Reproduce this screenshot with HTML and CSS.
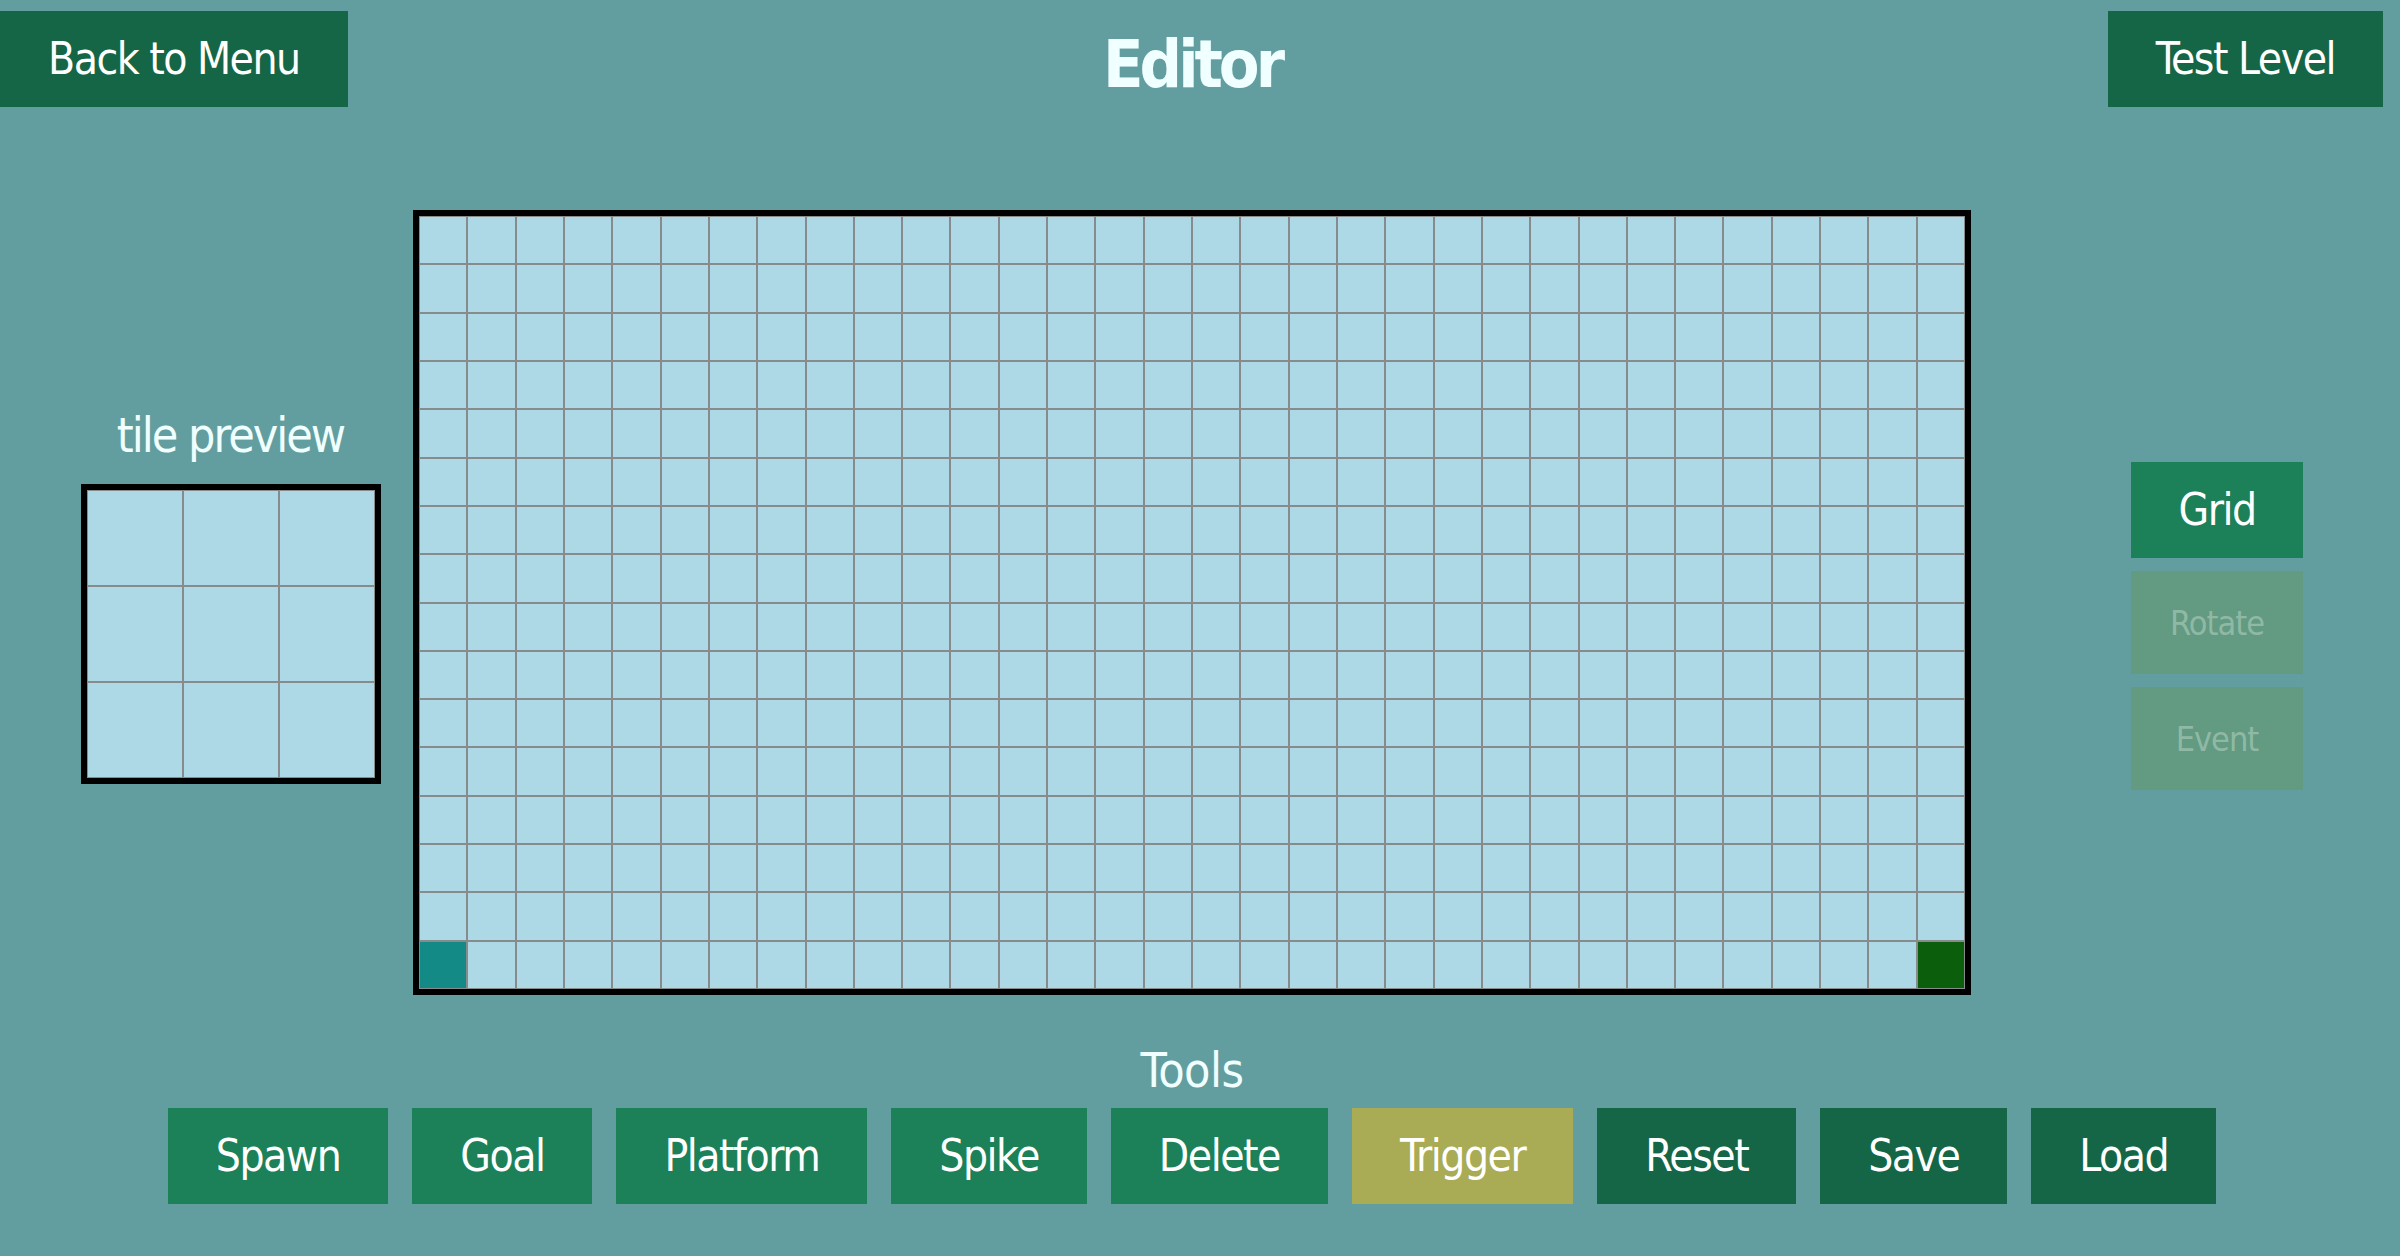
FILE: index.html
```html
<!DOCTYPE html>
<html lang="en">
<head>
<meta charset="utf-8">
<title>Editor</title>
<link rel="stylesheet" href="styles.css">
</head>
<body>
<div class="page">
  <header class="topbar">
    <button class="btn btn-dark back">Back to Menu</button>
    <h1 class="title">Editor</h1>
    <button class="btn btn-dark test">Test Level</button>
  </header>

  <main class="workspace">
    <aside class="preview-col">
      <h2 class="label">tile preview</h2>
      <div class="preview">
        <i></i><i></i><i></i><i></i><i></i><i></i><i></i><i></i><i></i>
      </div>
    </aside>

    <div class="board">
      <i></i><i></i><i></i><i></i><i></i><i></i><i></i><i></i><i></i><i></i><i></i><i></i><i></i><i></i><i></i><i></i><i></i><i></i><i></i><i></i><i></i><i></i><i></i><i></i><i></i><i></i><i></i><i></i><i></i><i></i><i></i><i></i>
      <i></i><i></i><i></i><i></i><i></i><i></i><i></i><i></i><i></i><i></i><i></i><i></i><i></i><i></i><i></i><i></i><i></i><i></i><i></i><i></i><i></i><i></i><i></i><i></i><i></i><i></i><i></i><i></i><i></i><i></i><i></i><i></i>
      <i></i><i></i><i></i><i></i><i></i><i></i><i></i><i></i><i></i><i></i><i></i><i></i><i></i><i></i><i></i><i></i><i></i><i></i><i></i><i></i><i></i><i></i><i></i><i></i><i></i><i></i><i></i><i></i><i></i><i></i><i></i><i></i>
      <i></i><i></i><i></i><i></i><i></i><i></i><i></i><i></i><i></i><i></i><i></i><i></i><i></i><i></i><i></i><i></i><i></i><i></i><i></i><i></i><i></i><i></i><i></i><i></i><i></i><i></i><i></i><i></i><i></i><i></i><i></i><i></i>
      <i></i><i></i><i></i><i></i><i></i><i></i><i></i><i></i><i></i><i></i><i></i><i></i><i></i><i></i><i></i><i></i><i></i><i></i><i></i><i></i><i></i><i></i><i></i><i></i><i></i><i></i><i></i><i></i><i></i><i></i><i></i><i></i>
      <i></i><i></i><i></i><i></i><i></i><i></i><i></i><i></i><i></i><i></i><i></i><i></i><i></i><i></i><i></i><i></i><i></i><i></i><i></i><i></i><i></i><i></i><i></i><i></i><i></i><i></i><i></i><i></i><i></i><i></i><i></i><i></i>
      <i></i><i></i><i></i><i></i><i></i><i></i><i></i><i></i><i></i><i></i><i></i><i></i><i></i><i></i><i></i><i></i><i></i><i></i><i></i><i></i><i></i><i></i><i></i><i></i><i></i><i></i><i></i><i></i><i></i><i></i><i></i><i></i>
      <i></i><i></i><i></i><i></i><i></i><i></i><i></i><i></i><i></i><i></i><i></i><i></i><i></i><i></i><i></i><i></i><i></i><i></i><i></i><i></i><i></i><i></i><i></i><i></i><i></i><i></i><i></i><i></i><i></i><i></i><i></i><i></i>
      <i></i><i></i><i></i><i></i><i></i><i></i><i></i><i></i><i></i><i></i><i></i><i></i><i></i><i></i><i></i><i></i><i></i><i></i><i></i><i></i><i></i><i></i><i></i><i></i><i></i><i></i><i></i><i></i><i></i><i></i><i></i><i></i>
      <i></i><i></i><i></i><i></i><i></i><i></i><i></i><i></i><i></i><i></i><i></i><i></i><i></i><i></i><i></i><i></i><i></i><i></i><i></i><i></i><i></i><i></i><i></i><i></i><i></i><i></i><i></i><i></i><i></i><i></i><i></i><i></i>
      <i></i><i></i><i></i><i></i><i></i><i></i><i></i><i></i><i></i><i></i><i></i><i></i><i></i><i></i><i></i><i></i><i></i><i></i><i></i><i></i><i></i><i></i><i></i><i></i><i></i><i></i><i></i><i></i><i></i><i></i><i></i><i></i>
      <i></i><i></i><i></i><i></i><i></i><i></i><i></i><i></i><i></i><i></i><i></i><i></i><i></i><i></i><i></i><i></i><i></i><i></i><i></i><i></i><i></i><i></i><i></i><i></i><i></i><i></i><i></i><i></i><i></i><i></i><i></i><i></i>
      <i></i><i></i><i></i><i></i><i></i><i></i><i></i><i></i><i></i><i></i><i></i><i></i><i></i><i></i><i></i><i></i><i></i><i></i><i></i><i></i><i></i><i></i><i></i><i></i><i></i><i></i><i></i><i></i><i></i><i></i><i></i><i></i>
      <i></i><i></i><i></i><i></i><i></i><i></i><i></i><i></i><i></i><i></i><i></i><i></i><i></i><i></i><i></i><i></i><i></i><i></i><i></i><i></i><i></i><i></i><i></i><i></i><i></i><i></i><i></i><i></i><i></i><i></i><i></i><i></i>
      <i></i><i></i><i></i><i></i><i></i><i></i><i></i><i></i><i></i><i></i><i></i><i></i><i></i><i></i><i></i><i></i><i></i><i></i><i></i><i></i><i></i><i></i><i></i><i></i><i></i><i></i><i></i><i></i><i></i><i></i><i></i><i></i>
      <i class="spawn"></i><i></i><i></i><i></i><i></i><i></i><i></i><i></i><i></i><i></i><i></i><i></i><i></i><i></i><i></i><i></i><i></i><i></i><i></i><i></i><i></i><i></i><i></i><i></i><i></i><i></i><i></i><i></i><i></i><i></i><i></i><i class="goal"></i>
    </div>

    <aside class="side-tools">
      <button class="btn btn-tool side">Grid</button>
      <button class="btn btn-off side" disabled>Rotate</button>
      <button class="btn btn-off side" disabled>Event</button>
    </aside>
  </main>

  <section class="tools">
    <h2 class="label tools-label">Tools</h2>
    <div class="tool-row">
      <button class="btn btn-tool">Spawn</button>
      <button class="btn btn-tool">Goal</button>
      <button class="btn btn-tool">Platform</button>
      <button class="btn btn-tool">Spike</button>
      <button class="btn btn-tool">Delete</button>
      <button class="btn btn-trigger">Trigger</button>
      <button class="btn btn-dark">Reset</button>
      <button class="btn btn-dark">Save</button>
      <button class="btn btn-dark">Load</button>
    </div>
  </section>
</div>
</body>
</html>
```
FILE: styles.css
```css
* { box-sizing: border-box; }

html, body {
  margin: 0;
  padding: 0;
  background: #629e9f;
  overflow: hidden;
}

.page {
  width: 2384px;
  height: 1256px;
  font-family: "DejaVu Sans Condensed", "DejaVu Sans", sans-serif;
}

/* ---------- buttons ---------- */
.btn {
  font-family: inherit;
  font-size: 44px;
  letter-spacing: -1.5px;
  line-height: 56px;
  padding: 20px 48px;
  border: 0;
  border-radius: 0;
  color: #ffffff;
  cursor: pointer;
  white-space: nowrap;
}

.btn-dark { background: #156647; }
.btn-tool { background: #1c8159; }
.btn-trigger { background: #a9ab55; }
.btn-off {
  background: #639a82;
  color: #8fb9a5;
  font-size: 34px;
  letter-spacing: -1px;
  cursor: default;
}

/* ---------- top bar ---------- */
.topbar {
  display: grid;
  grid-template-columns: 1fr auto 1fr;
  align-items: start;
  padding-top: 11px;
}

.back { justify-self: start; }
.test { justify-self: end; margin-right: 1px; }

.title {
  margin: 14px 0 0;
  font-size: 66px;
  letter-spacing: -4px;
  line-height: 80px;
  font-weight: bold;
  color: #f0ffff;
}

/* ---------- workspace ---------- */
.workspace {
  display: grid;
  grid-template-columns: 413px auto 1fr;
  align-items: start;
  margin-top: 103px;
}

.preview-col {
  display: flex;
  flex-direction: column;
  align-items: center;
  padding-left: 48px;
  margin-top: 195px;
}

.label {
  margin: 0;
  font-size: 48px;
  letter-spacing: -2px;
  line-height: 60px;
  font-weight: normal;
  color: #f0ffff;
}

.preview {
  margin-top: 19px;
  width: 300px;
  height: 300px;
  border: 6px solid #000;
  background: #add8e6;
  display: grid;
  grid-template-columns: repeat(3, 1fr);
  grid-template-rows: repeat(3, 1fr);
}

.board {
  width: 1558px;
  height: 785px;
  border: 6px solid #000;
  background: #add8e6;
  display: grid;
  grid-template-columns: repeat(32, 1fr);
  grid-template-rows: repeat(16, 1fr);
}

.preview i,
.board i {
  display: block;
  border: 1px solid #888b8c;
  background: #add8e6;
}

.board i.spawn { background: #138a85; }
.board i.goal { background: #0b5e0b; }

.side-tools {
  display: flex;
  flex-direction: column;
  align-items: flex-start;
  gap: 13px;
  padding-left: 160px;
  margin-top: 252px;
}

.side {
  width: 172px;
  height: 96px;
  padding: 0;
  text-align: center;
}

.side.btn-off { height: 103px; }

/* ---------- tools ---------- */
.tools {
  margin-top: 45px;
  display: flex;
  flex-direction: column;
  align-items: center;
}

.tools-label {
  text-align: center;
  letter-spacing: -0.5px;
}

.tool-row {
  display: flex;
  justify-content: center;
  gap: 24px;
  margin-top: 8px;
}
```
